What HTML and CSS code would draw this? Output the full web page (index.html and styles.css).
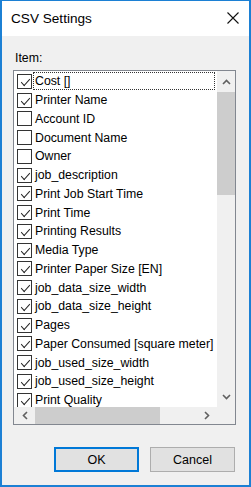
FILE: index.html
```html
<!DOCTYPE html>
<html>
<head>
<meta charset="utf-8">
<link rel="stylesheet" href="styles.css">
</head>
<body>
<div class="window">
  <div class="titlebar">
    <span class="title">CSV Settings</span>
    <svg class="close" width="12" height="12" viewBox="0 0 12 12"><path d="M0.5 0.5 L11.5 11.5 M11.5 0.5 L0.5 11.5" stroke="#111" stroke-width="1.1" fill="none"/></svg>
  </div>
  <div class="client">
    <div class="label">Item:</div>
    <div class="listbox">
      <div class="items">
        <div class="row"><span class="cb on"></span><span class="text focus">Cost []</span></div>
        <div class="row"><span class="cb on"></span><span class="text">Printer Name</span></div>
        <div class="row"><span class="cb"></span><span class="text">Account ID</span></div>
        <div class="row"><span class="cb"></span><span class="text">Document Name</span></div>
        <div class="row"><span class="cb"></span><span class="text">Owner</span></div>
        <div class="row"><span class="cb on"></span><span class="text">job_description</span></div>
        <div class="row"><span class="cb on"></span><span class="text">Print Job Start Time</span></div>
        <div class="row"><span class="cb on"></span><span class="text">Print Time</span></div>
        <div class="row"><span class="cb on"></span><span class="text">Printing Results</span></div>
        <div class="row"><span class="cb on"></span><span class="text">Media Type</span></div>
        <div class="row"><span class="cb on"></span><span class="text">Printer Paper Size [EN]</span></div>
        <div class="row"><span class="cb on"></span><span class="text">job_data_size_width</span></div>
        <div class="row"><span class="cb on"></span><span class="text">job_data_size_height</span></div>
        <div class="row"><span class="cb on"></span><span class="text">Pages</span></div>
        <div class="row"><span class="cb on"></span><span class="text">Paper Consumed [square meter]</span></div>
        <div class="row"><span class="cb on"></span><span class="text">job_used_size_width</span></div>
        <div class="row"><span class="cb on"></span><span class="text">job_used_size_height</span></div>
        <div class="row"><span class="cb on"></span><span class="text">Print Quality</span></div>
      </div>
      <div class="vscroll">
        <div class="sbtn v"><svg width="9" height="6" viewBox="0 0 9 6"><path d="M1 5 L4.5 1.5 L8 5" stroke="#606060" stroke-width="1.6" fill="none"/></svg></div>
        <div class="vtrack"><div class="vthumb"></div></div>
        <div class="sbtn v"><svg width="9" height="6" viewBox="0 0 9 6"><path d="M1 1 L4.5 4.5 L8 1" stroke="#606060" stroke-width="1.6" fill="none"/></svg></div>
      </div>
      <div class="hscroll">
        <div class="sbtn h"><svg width="6" height="9" viewBox="0 0 6 9"><path d="M5 1 L1.5 4.5 L5 8" stroke="#606060" stroke-width="1.6" fill="none"/></svg></div>
        <div class="htrack"><div class="hthumb"></div></div>
        <div class="sbtn h"><svg width="6" height="9" viewBox="0 0 6 9"><path d="M1 1 L4.5 4.5 L1 8" stroke="#606060" stroke-width="1.6" fill="none"/></svg></div>
      </div>
      <div class="corner"></div>
    </div>
    <div class="buttons">
      <div class="btn default">OK</div>
      <div class="btn">Cancel</div>
    </div>
  </div>
</div>
</body>
</html>
```
FILE: styles.css
```css
* { box-sizing: border-box; }
html, body { margin: 0; padding: 0; }
body {
  width: 251px;
  height: 487px;
  font-family: "Liberation Sans", Arial, sans-serif;
  font-size: 12.3px;
  color: #000;
  background: #fff;
}
.window {
  width: 251px;
  height: 487px;
  border: 2px solid #1c80d4;
  border-top-width: 1px;
  background: #f0f0f0;
  display: flex;
  flex-direction: column;
}
.titlebar {
  height: 35px;
  background: #fff;
  display: flex;
  align-items: center;
  padding: 1px 10px 0 9px;
}
.title {
  font-size: 13.6px;
  line-height: 16px;
  color: #000;
}
.close {
  margin-left: auto;
  margin-bottom: 3px;
}
.client {
  flex: 1;
  display: flex;
  flex-direction: column;
  padding: 14px 13px 13px 11px;
}
.label {
  line-height: 16px;
  height: 16px;
  padding-left: 2px;
  margin-bottom: 4px;
}
.listbox {
  height: 355px;
  border: 1px solid #828790;
  background: #fff;
  display: grid;
  grid-template-columns: 1fr 18px;
  grid-template-rows: 1fr 17px;
}
.items {
  overflow: hidden;
  padding-top: 1px;
}
.row {
  height: 18.75px;
  display: flex;
  align-items: center;
  padding-left: 3px;
  padding-right: 2px;
}
.cb {
  width: 15px;
  height: 15px;
  border: 1px solid #333;
  background: #fff;
  flex: none;
  position: relative;
}
.cb.on::after {
  content: "";
  position: absolute;
  left: 2px;
  top: 0px;
  width: 8px;
  height: 4px;
  border-left: 1.3px solid #222;
  border-bottom: 1.3px solid #222;
  transform: translate(1px, 3.5px) rotate(-48deg) skewX(-6deg);
  transform-origin: 50% 50%;
}
.text {
  flex: 1;
  height: 18px;
  line-height: 16px;
  margin-left: 1px;
  padding-left: 1px;
  border: 1px solid transparent;
  white-space: nowrap;
}
.text.focus {
  border: 1px dotted #333;
}
.vscroll {
  background: #f0f0f0;
  display: flex;
  flex-direction: column;
}
.sbtn {
  display: flex;
  align-items: center;
  justify-content: center;
  flex: none;
}
.sbtn.v { height: 21px; }
.sbtn.h { width: 21px; }
.vtrack { flex: 1; }
.vthumb {
  height: 103px;
  background: #cdcdcd;
}
.hscroll {
  background: #f0f0f0;
  display: flex;
}
.htrack { flex: 1; }
.hthumb {
  width: 125px;
  height: 100%;
  background: #cdcdcd;
}
.corner { background: #f0f0f0; }
.buttons {
  display: flex;
  justify-content: flex-end;
  gap: 11px;
  margin-top: 22px;
  padding-right: 1px;
}
.btn {
  width: 85px;
  height: 25px;
  background: #e1e1e1;
  border: 1px solid #adadad;
  display: flex;
  align-items: center;
  justify-content: center;
  font-size: 12.5px;
}
.btn.default {
  border: 2px solid #0078d7;
}
```
